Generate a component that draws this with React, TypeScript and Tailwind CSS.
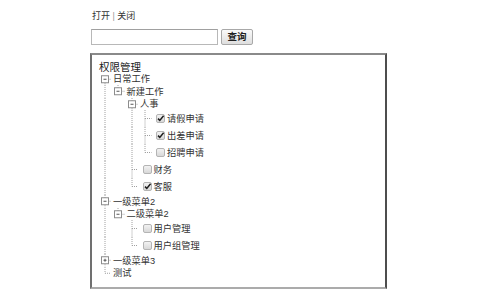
import React from "react";

type TreeNode = {
    name: string;
    children?: TreeNode[];
    open?: boolean;
    check?: boolean;
};

type Row = {
    node: TreeNode;
    level: number;
    guides: boolean[];
    first: boolean;
    last: boolean;
};

const treeData: TreeNode[] = [
    {
        name: "日常工作",
        open: true,
        children: [
            {
                name: "新建工作",
                open: true,
                children: [
                    {
                        name: "人事",
                        open: true,
                        children: [
                            { name: "请假申请", check: true },
                            { name: "出差申请", check: true },
                            { name: "招聘申请", check: false },
                        ],
                    },
                    { name: "财务", check: false },
                    { name: "客服", check: true },
                ],
            },
        ],
    },
    {
        name: "一级菜单2",
        open: true,
        children: [
            {
                name: "二级菜单2",
                open: true,
                children: [
                    { name: "用户管理", check: false },
                    { name: "用户组管理", check: false },
                ],
            },
        ],
    },
    { name: "一级菜单3", open: false, children: [{ name: "hidden" }] },
    { name: "测试" },
];

// flatten the tree into visible rows, keeping track of which guide lines to draw
const flatten = (nodes: TreeNode[], level: number, guides: boolean[], out: Row[]) => {
    nodes.forEach((node, i) => {
        const last = i === nodes.length - 1;
        out.push({ node, level, guides, first: level === 0 && i === 0, last });
        if (node.children && node.open) {
            flatten(node.children, level + 1, [...guides, !last], out);
        }
    });
    return out;
};

const COL = 13.5;
const CX = 7;
const LINE = "#a0a0a0";

const rowHeight = (row: Row) => (row.node.check !== undefined ? 17 : 12.5);

function Guide({ show, h }: { show: boolean; h: number }) {
    return (
        <svg width={COL} height={h} className="shrink-0 block">
            {show && <line x1={CX} y1={0} x2={CX} y2={h} stroke={LINE} strokeDasharray="1 1" />}
        </svg>
    );
}

function Switch({ row, h }: { row: Row; h: number }) {
    const cy = h / 2;
    const isFolder = !!row.node.children;
    const top = !row.first;
    const bottom = !row.last;
    return (
        <svg width={COL} height={h} className="shrink-0 block">
            {top && <line x1={CX} y1={0} x2={CX} y2={cy} stroke={LINE} strokeDasharray="1 1" />}
            {bottom && <line x1={CX} y1={cy} x2={CX} y2={h} stroke={LINE} strokeDasharray="1 1" />}
            {isFolder ? (
                <>
                    <line x1={CX + 3.5} y1={cy} x2={COL} y2={cy} stroke={LINE} strokeDasharray="1 1" />
                    <rect x={CX - 3.5} y={cy - 3.5} width={7} height={7} fill="#fff" stroke="#8c8c8c" />
                    <line x1={CX - 1.5} y1={cy} x2={CX + 1.5} y2={cy} stroke="#555" />
                    {!row.node.open && <line x1={CX} y1={cy - 1.5} x2={CX} y2={cy + 1.5} stroke="#555" />}
                </>
            ) : (
                <line x1={CX} y1={cy} x2={COL} y2={cy} stroke={LINE} strokeDasharray="1 1" />
            )}
        </svg>
    );
}

function CheckBox({ checked }: { checked: boolean }) {
    return (
        <svg width={9} height={9} className="shrink-0 block ml-[4.5px]">
            <defs>
                <linearGradient id="cbg" x1="0" y1="0" x2="0" y2="1">
                    <stop offset="0" stopColor="#f4f4f4" />
                    <stop offset="1" stopColor="#d6d6d6" />
                </linearGradient>
            </defs>
            <rect x={0.5} y={0.5} width={8} height={8} rx={1.5} fill="url(#cbg)" stroke="#b4b4b4" />
            {checked && <path d="M2 4.6 L3.8 6.4 L7.6 1.8" fill="none" stroke="#1e1e1e" strokeWidth={1.5} />}
        </svg>
    );
}

export default function App() {
    const rows = flatten(treeData, 0, [], []);

    return (
        <div
            className="w-[480px] h-[300px] bg-white pt-[10px] pl-[90px] text-[#333]"
            style={{ fontFamily: '"Liberation Sans", "Noto Sans CJK SC", sans-serif' }}
        >
            {/* open / close links */}
            <div className="h-[12px] leading-[12px] text-[9px] ml-[2px]">
                打开 <span className="text-[#999]">|</span> 关闭
            </div>

            {/* search bar */}
            <div className="mt-[7px] flex flex-row items-center h-[16px]">
                <input className="ml-[1px] w-[127px] h-[16px] border border-[#b8b8b8] border-t-[#a0a0a0] bg-white outline-none" />
                <button className="ml-[3px] w-[32px] h-[16px] border border-[#a8a8a8] rounded-[2px] bg-gradient-to-b from-[#fafafa] to-[#dedede] text-[9.5px] font-bold leading-[14px] text-[#222]">
                    查询
                </button>
            </div>

            {/* tree box */}
            <div className="mt-[8px] w-[297px] h-[236px] border-2 border-t-[#8a8a8a] border-l-[#707070] border-r-[#4e4e4e] border-b-[#ababab] pt-[7px] pl-[7px]">
                <div className="h-[10.75px] leading-[10.75px] text-[10.5px] text-[#222]">权限管理</div>
                <div className="ml-[-1.5px] flex flex-col">
                    {rows.map((row) => {
                        const h = rowHeight(row);
                        return (
                            <div key={row.node.name} className="flex flex-row items-center" style={{ height: h }}>
                                {row.guides.map((g, i) => (
                                    <Guide key={i} show={g} h={h} />
                                ))}
                                <Switch row={row} h={h} />
                                {row.node.check !== undefined && <CheckBox checked={row.node.check} />}
                                <span className="ml-[2px] text-[9.25px] leading-[12px] whitespace-nowrap">{row.node.name}</span>
                            </div>
                        );
                    })}
                </div>
            </div>
        </div>
    );
}
